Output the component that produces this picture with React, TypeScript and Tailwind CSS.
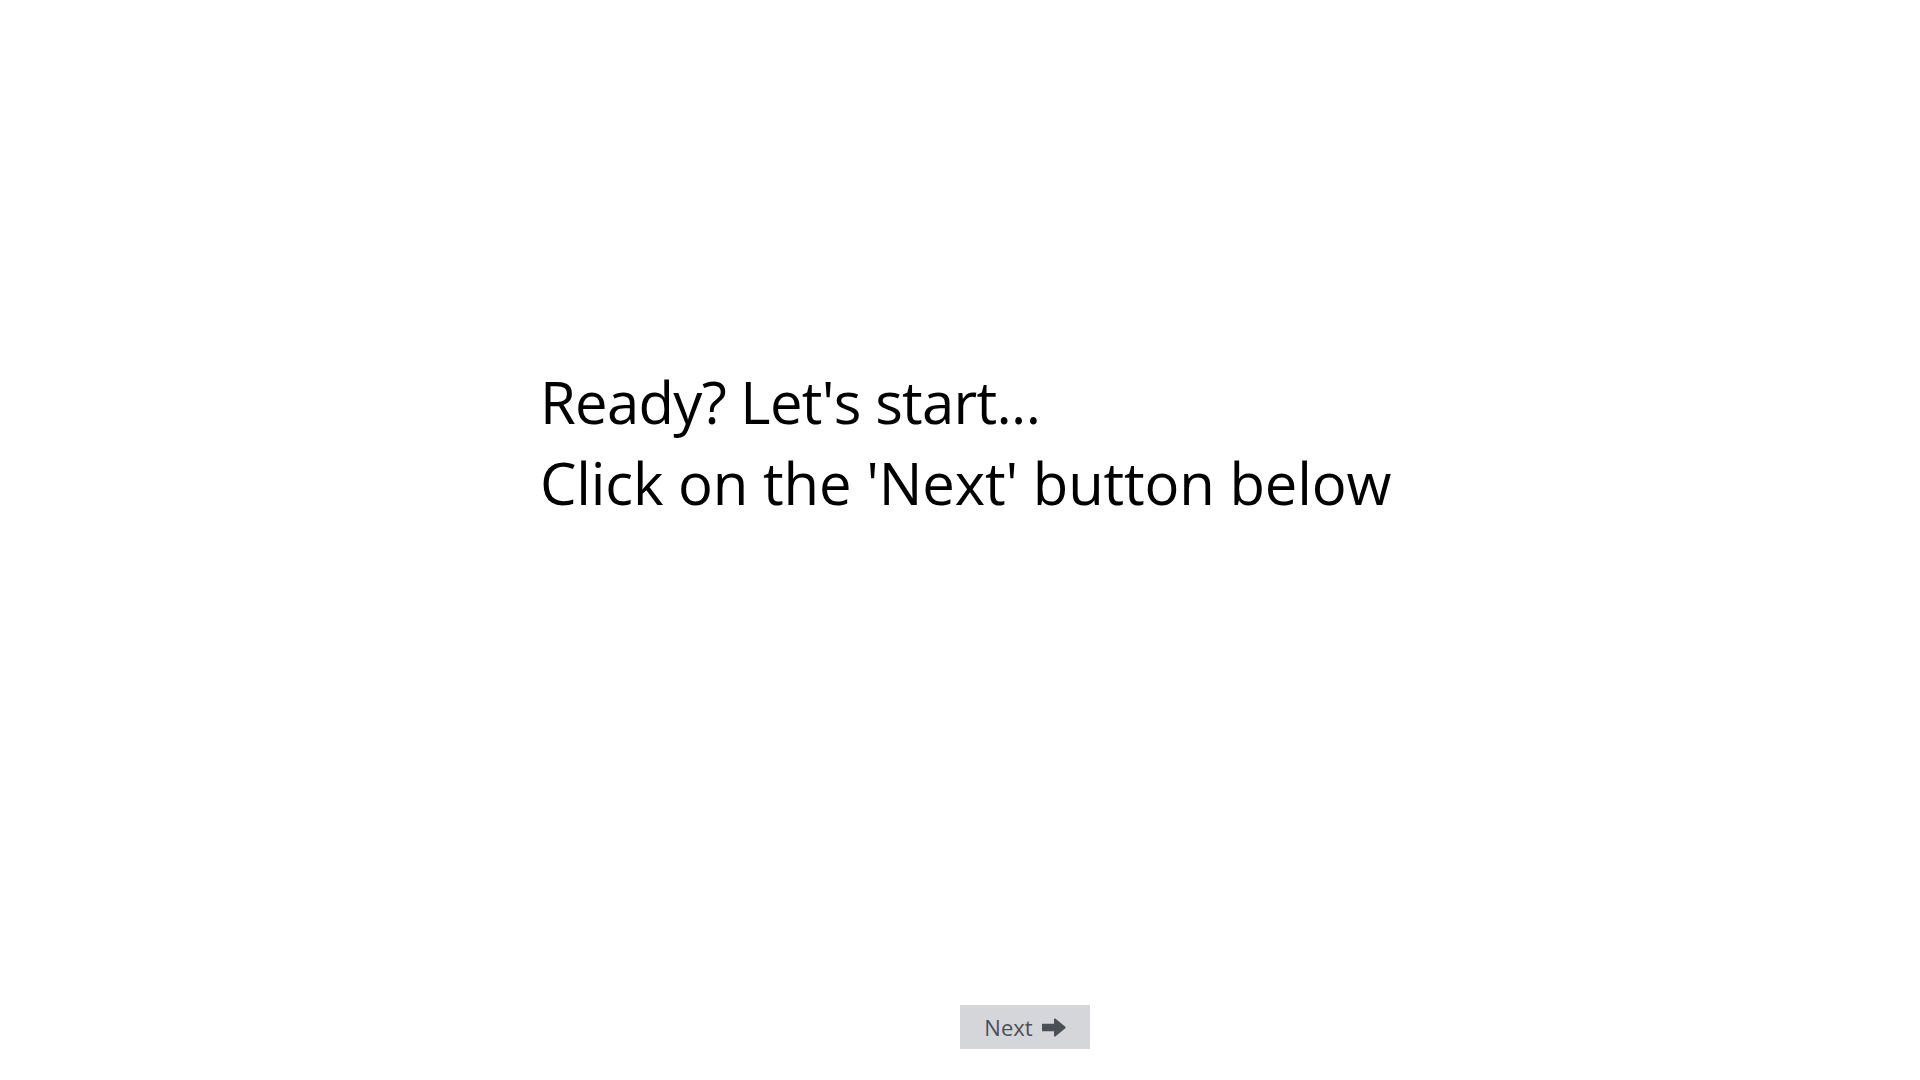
import React from 'react';

const ArrowRight: React.FC = () => (
  <svg width="24" height="19" viewBox="0 0 23 18" className="fill-current">
    <path d="M0 5.5h11.5V1.2c0-.8.9-1.2 1.5-.7l9.4 7.8c.4.4.4 1 0 1.4L13 17.5c-.6.5-1.5.1-1.5-.7v-4.3H0z" />
  </svg>
);

const App: React.FC = () => {
  return (
    <div className="relative min-h-screen w-full bg-white font-['Open_Sans',sans-serif] text-black">
      <main className="mx-auto w-[840px] whitespace-nowrap pt-[361px]">
        <p className="text-[58px] leading-[81px] tracking-[-0.012em]">Ready? Let's start...</p>
        <p className="text-[58px] leading-[81px] tracking-[-0.003em]">Click on the 'Next' button below</p>
      </main>

      <div className="absolute left-[960px] top-[1005px]">
        <button className="flex h-[44px] w-[130px] items-center justify-center gap-[9px] bg-[#d4d6d9] pt-[1px] text-[22px] text-[#4b4f56]">
          <span>Next</span>
          <ArrowRight />
        </button>
      </div>
    </div>
  );
};

export default App;
